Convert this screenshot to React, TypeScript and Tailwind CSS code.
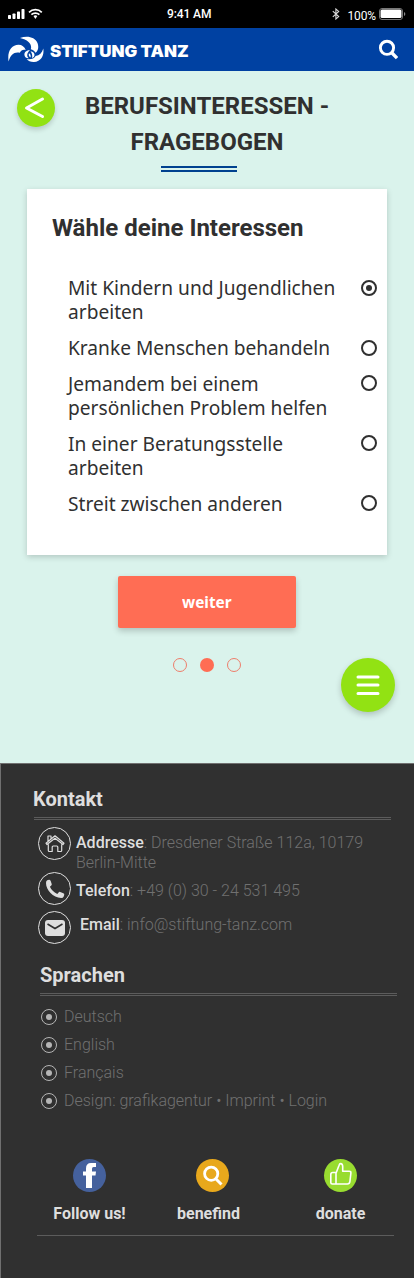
import React from "react";

const roboto = "font-['Roboto',sans-serif]";
const noto = "font-['Noto_Sans',sans-serif]";

function StatusBar() {
  return (
    <div className={`${roboto} flex h-7 items-center bg-black text-xs text-white`}>
      <div className="flex w-[167px] items-center pl-2">
        <svg width="36" height="12" viewBox="0 0 36 12" fill="none">
          <g fill="#fff">
            <rect x="0" y="7" width="3" height="4" rx=".7" />
            <rect x="4.5" y="5.5" width="3" height="5.5" rx=".7" />
            <rect x="9" y="3.5" width="3" height="7.5" rx=".7" />
            <rect x="13.5" y="1" width="3" height="10" rx=".7" />
            <path d="M25.5 8.1a3 3 0 0 1 3.8 0L27.4 10.9z" />
          </g>
          <path d="M21 4.3a9.2 9.2 0 0 1 12.8 0M23.4 6.7a5.8 5.8 0 0 1 8 0" stroke="#fff" strokeWidth="1.7" />
        </svg>
      </div>
      <span className="w-[80px] font-medium tracking-[-0.1px]">9:41 AM</span>
      <div className="flex flex-1 items-center justify-end pr-[8px]">
        <svg width="8" height="12" viewBox="0 0 8 12" fill="none" stroke="#ddd" strokeWidth="1.1">
          <path d="M.8 3.2 6.7 8.6 3.9 11V1l2.8 2.4L.8 8.8" />
        </svg>
        <span className="ml-[7px] mt-[3px] tracking-[-0.1px]">100%</span>
        <svg className="ml-[3px]" width="27" height="12" viewBox="0 0 27 12">
          <rect x=".5" y=".5" width="23" height="11" rx="2.5" fill="none" stroke="#777" />
          <rect x="1.500" y="1.500" width="21" height="8.500" rx="1.500" fill="#fff" />
          <path d="M25 4v4q1.300-.7 1.300-2T25 4" fill="#888" />
        </svg>
      </div>
    </div>
  );
}

function Header() {
  return (
    <header className="flex h-[43px] items-center bg-[#0041a2] pl-2 pr-4">
      <svg width="37" height="27" viewBox="0 0 37 27" fill="#fff">
        <path d="M.6 25.500C-1 15.500 3.500 8.800 10.500 8.800c3.500 0 6 2 7.200 5.200-2.200-.8-4.700-.2-5.900 2.800C6.500 15.500 2.500 18.500 .6 25.500z" />
        <path d="M12 2C19-.8 27 .8 29.500 7c1.500 4.200.7 7.700-2 9.800C26.500 15 24.800 13.800 22.800 13.200 24.300 8.500 20.500 3.800 12 2z" />
        <path d="M35.300 12.500c1.200 7.500-2.800 13.300-9.300 13.500-3.300.1-5.800-1-7.300-3 2.300.5 4.600.3 6.300-.5 0 0 1.800-.8 2.600-2.500C31.500 19.500 34 17 35.300 12.500z" />
        <path d="M22 14.200c-3.700-.3-6 2.200-5.500 5 .3 2 2 3.200 4.300 3-2.200-1.700-2.300-5.300 1.200-8z" />
        <path d="M22.500 15.200c2.500.3 4.200 1.800 4 3.800-.1 1.500-1 2.500-2.500 3 .7-2.500 0-5-1.500-6.800z" />
        <path d="M21 17.300c1.500 1 2 2.500 1.500 4.200-1.500-.7-2.200-2.400-1.500-4.200z" />
      </svg>
      <span className="ml-[5px] mt-1 inline-block w-[140px] origin-left scale-x-[1.09] whitespace-nowrap font-['Inter',sans-serif] text-[15.5px] font-black leading-5 text-white">
        STIFTUNG TANZ
      </span>
      <svg className="ml-auto" width="20" height="21" viewBox="0 0 20 21" fill="none" stroke="#fff">
        <circle cx="9" cy="8.800" r="6.600" strokeWidth="2.900" />
        <path d="m13.500 13.500 5.500 5.700" strokeWidth="3.300" />
      </svg>
    </header>
  );
}

const options = [
  { text: "Mit Kindern und Jugendlichen\narbeiten", selected: true, offset: "mt-1" },
  { text: "Kranke Menschen behandeln", selected: false, offset: "mt-1" },
  { text: "Jemandem bei einem\npersönlichen Problem helfen", selected: false, offset: "mt-[3px]" },
  { text: "In einer Beratungsstelle\narbeiten", selected: false, offset: "mt-[3px]" },
  { text: "Streit zwischen anderen", selected: false, offset: "mt-[3px]" },
];

function Questionnaire() {
  return (
    <section className="ml-[27px] mt-[17px] h-[366px] w-[360px] bg-white pl-[25px] pr-[10px] pt-[21px] shadow-[0_2px_6px_rgba(0,0,0,0.18)]">
      <h2 className={`${roboto} text-2xl font-bold leading-9 text-[#303030]`}>Wähle deine Interessen</h2>
      <ul className={`${noto} mt-[30px] space-y-3 pl-4 text-xl leading-6 text-[#303030]`}>
        {options.map((option) => (
          <li key={option.text} className="flex items-start justify-between">
            <span className="w-[284px] origin-left scale-x-[0.957] whitespace-pre">{option.text}</span>
            <span className={`${option.offset} flex size-4 shrink-0 items-center justify-center rounded-full border-2 border-[#303030]`}>
              {option.selected && <span className="size-1.5 rounded-full bg-[#303030]" />}
            </span>
          </li>
        ))}
      </ul>
    </section>
  );
}

function Main() {
  return (
    <main className="relative h-[692px] bg-[#daf3ec] pt-[17px]">
      <button aria-label="Zurück" className="absolute left-[17px] top-[18px] size-[38px] rounded-full bg-[#92e213] shadow-[0_3px_5px_rgba(0,0,0,0.16)]">
        <svg width="38" height="38" viewBox="0 0 38 38" fill="none" stroke="#fff" strokeWidth="3" strokeLinecap="round" strokeLinejoin="round">
          <path d="M25.500 10 9.500 19l16 8.500" />
        </svg>
      </button>
      <h1 className={`${roboto} text-center text-2xl font-bold leading-9 text-[#303030]`}>
        BERUFSINTERESSEN -<br />FRAGEBOGEN
      </h1>
      <div className="ml-[161px] mt-[6px] h-[6px] w-[76px] border-y-2 border-[#00418f]" />
      <Questionnaire />
      <button className={`${noto} ml-[118px] mt-[21px] block h-[52px] w-[178px] rounded-[2px] bg-[#ff6d54] text-base font-bold text-white shadow-[0_3px_6px_rgba(0,0,0,0.2)]`}>
        <span className="inline-block scale-x-[0.96]">weiter</span>
      </button>
      <div className="mt-[30px] flex justify-center gap-[13px]">
        <span className="size-[14px] rounded-full border border-[#ee7e6b]" />
        <span className="size-[14px] rounded-full bg-[#ff6d54]" />
        <span className="size-[14px] rounded-full border border-[#ee7e6b]" />
      </div>
      <button aria-label="Menü" className="absolute left-[341px] top-[587px] size-[54px] rounded-full bg-[#92e213] shadow-[0_3px_6px_rgba(0,0,0,0.2)]">
        <svg width="54" height="54" viewBox="0 0 54 54" stroke="#fff" strokeWidth="3" strokeLinecap="round">
          <path d="M17 19h20M17 27h20M17 35.500h20" />
        </svg>
      </button>
    </main>
  );
}

function Badge({ children }: { children: React.ReactNode }) {
  return (
    <span className="flex size-[33px] shrink-0 items-center justify-center rounded-full border border-[#dedede]">
      {children}
    </span>
  );
}

const languages = ["Deutsch", "English", "Français", "Design: grafikagentur • Imprint • Login"];

function Footer() {
  return (
    <footer className={`${roboto} h-[515px] border-l border-t border-[#707070] bg-[#303030] text-base leading-5 text-[#707070]`}>
      <h3 className="ml-8 mt-[25px] text-xl font-bold leading-5 text-[#dedede]">Kontakt</h3>
      <div className="ml-[33px] mt-2 h-[3px] w-[357px] border-y border-[#5c5c5c]" />
      <div className="ml-[37px] mt-[7px] flex h-[45px] gap-[5px]">
        <Badge>
          <svg width="20" height="19" viewBox="0 0 20 19" fill="none" stroke="#dedede" strokeWidth="1.200" strokeLinejoin="round" strokeLinecap="round">
            <path d="M1 9.200 10 1.800l9 7.400-.9 1.300L10 4.200 1.900 10.500zM3 7V2h3v2.500M3.300 10.500v6q0 1 1 1h2.900v-4.500q0-1 1-1h3.600q1 0 1 1v4.500h2.900q1 0 1-1v-6" />
          </svg>
        </Badge>
        <p className="mt-[6px] font-light">
          <span className="font-medium text-[#dedede]">Addresse</span>: Dresdener Straße 112a, 10179<br />Berlin-Mitte
        </p>
      </div>
      <div className="ml-[37px] flex h-[39px] gap-[5px]">
        <Badge>
          <svg width="20" height="20" viewBox="0 0 20 20" fill="#dedede">
            <path d="M2.200 1.200 4 .8q1.200 0 1.700 1.200l1 3q.3 1-.7 1.800L4.900 7.700q2 4.600 7.400 7.300l1.300-1.600q.6-.8 1.600-.4l3.200 1.300q1.200.5.8 1.700l-.5 1.500q-.6 1.500-2.500 1.500C8 18.500 1 11 1 4q0-2.100 1.200-2.800z" />
          </svg>
        </Badge>
        <p className="mt-[9px] font-light"><span className="font-medium text-[#dedede]">Telefon</span>: +49 (0) 30 - 24 531 495</p>
      </div>
      <div className="ml-[37px] flex h-[33px] gap-[9px]">
        <Badge>
          <svg width="20" height="16" viewBox="0 0 20 16">
            <rect width="20" height="16" rx="3" fill="#dedede" />
            <path d="m2.500 4 7.500 4.500L17.500 4" fill="none" stroke="#303030" strokeWidth="1.600" />
          </svg>
        </Badge>
        <p className="mt-1 font-light"><span className="font-medium text-[#dedede]">Email</span>: info@stiftung-tanz.com</p>
      </div>

      <h3 className="ml-[39px] mt-[21px] text-xl font-bold leading-5 text-[#dedede]">Sprachen</h3>
      <div className="ml-[39px] mt-2 h-[3px] w-[357px] border-y border-[#5c5c5c]" />
      <ul className="ml-10 mt-[11px] font-light">
        {languages.map((language) => (
          <li key={language} className="flex h-7 items-start">
            <span className="mt-[2px] flex size-4 items-center justify-center rounded-full border border-[#b5b5b5]">
              <span className="size-1.5 rounded-full bg-[#b5b5b5]" />
            </span>
            <span className="ml-[7px]">{language}</span>
          </li>
        ))}
      </ul>

      <div className="ml-[27px] mt-10 flex font-bold text-[#dedede]">
        <div className="flex w-[123px] flex-col items-center">
          <span className="flex size-[33px] items-center justify-center rounded-full bg-[#45619d]">
            <svg width="33" height="33" viewBox="0 0 33 33" fill="#fff">
              <path d="M13 29V16.500h-3v-4h3V9.500Q13 4 18 4h5v4h-2.500Q19 8 19 9.800v2.700h4l-.5 4H19V29z" />
            </svg>
          </span>
          <span className="mt-3">Follow us!</span>
        </div>
        <div className="flex w-[123px] flex-col items-center">
          <span className="flex size-[33px] items-center justify-center rounded-full bg-[#e8a81c]">
            <svg width="33" height="33" viewBox="0 0 33 33" fill="none" stroke="#fff" strokeWidth="2.800">
              <circle cx="15.200" cy="14.700" r="6.600" />
              <path d="m19.500 19.500 6 6" strokeWidth="3" />
            </svg>
          </span>
          <span className="-ml-2 mt-3">benefind</span>
        </div>
        <div className="ml-[9px] flex w-[115px] flex-col items-center">
          <span className="flex size-[33px] items-center justify-center rounded-full bg-[#98dc30]">
            <svg width="33" height="33" viewBox="0 0 33 33" fill="none" stroke="#fff" strokeWidth="1.600" strokeLinejoin="round">
              <path d="M6.800 15.500q0-2 2-2h3.500l2.700-7q.6-1.900 1.500-1.900 2.200 0 2.200 3v4.600h6.500q1.800 0 1.700 1.800l-1 8.500q-.3 2.500-2.500 2.500H8.300q-1.500 0-1.500-1.500zM12 13.500V25" />
            </svg>
          </span>
          <span className="mt-3">donate</span>
        </div>
      </div>
      <div className="ml-9 mt-[11px] h-px w-[357px] bg-[#5c5c5c]" />
    </footer>
  );
}

export default function App() {
  return (
    <div className="h-[1278px] w-[414px] overflow-hidden">
      <StatusBar />
      <Header />
      <Main />
      <Footer />
    </div>
  );
}
